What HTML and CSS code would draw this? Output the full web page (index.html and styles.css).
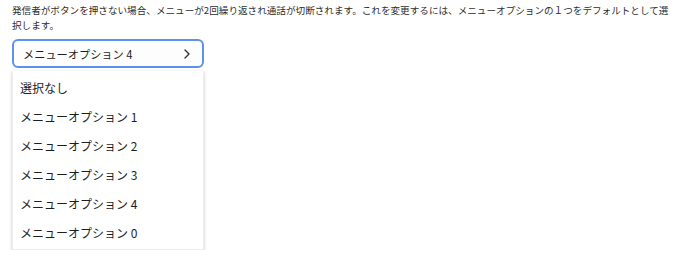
FILE: index.html
```html
<!DOCTYPE html>
<html lang="ja">
<head>
  <meta charset="UTF-8" />
  <meta name="viewport" content="width=device-width, initial-scale=1.0"/>
  <title>メニューオプション</title>
  <link rel="stylesheet" href="styles.css">
</head>
<body>

<p class="note">発信者がボタンを押さない場合、メニューが2回繰り返され通話が切断されます。これを変更するには、メニューオプションの１つをデフォルトとして選択します。</p>

<div class="select">
  <button class="select-button">
    <span>メニューオプション 4</span>
    <svg class="chevron" width="8" height="10" viewBox="0 0 8 10">
      <path d="M2 1 L6 5 L2 9" fill="none" stroke="#333" stroke-width="1.4" stroke-linecap="round" stroke-linejoin="round"/>
    </svg>
  </button>

  <ul class="menu">
    <li>選択なし</li>
    <li>メニューオプション 1</li>
    <li>メニューオプション 2</li>
    <li>メニューオプション 3</li>
    <li>メニューオプション 4</li>
    <li>メニューオプション 0</li>
  </ul>
</div>

</body>
</html>
```

FILE: styles.css
```css
body {
  margin: 0;
  padding: 3px 0 0 12px;
  font-family: "Noto Sans CJK JP", sans-serif;
  background-color: #ffffff;
  color: #333;
}
.note {
  margin: 0;
  width: 660px;
  font-size: 9.6px;
  line-height: 15px;
  color: #2e2e2e;
}
.select {
  display: flex;
  flex-direction: column;
  gap: 3px;
  width: 192px;
  margin-top: 6px;
}
.select-button {
  display: flex;
  align-items: center;
  justify-content: space-between;
  width: 192px;
  height: 29px;
  padding: 0 11px 0 9px;
  box-sizing: border-box;
  border: 2px solid #5e91ee;
  border-radius: 6px;
  background: #fdfdfd;
  font-family: inherit;
  font-size: 11.2px;
  color: #1e1e1e;
  cursor: pointer;
}
.chevron {
  display: block;
}
.menu {
  display: block;
  width: 192px;
  margin: 0;
  padding: 2px 0;
  box-sizing: border-box;
  list-style: none;
  background: #ffffff;
  border: 1px solid #ececec;
  border-top: none;
  box-shadow: 0 1px 3px rgba(0,0,0,0.22);
}
.menu li {
  height: 29px;
  line-height: 29px;
  padding-left: 7px;
  font-size: 12px;
  color: #1e1e1e;
}
```
